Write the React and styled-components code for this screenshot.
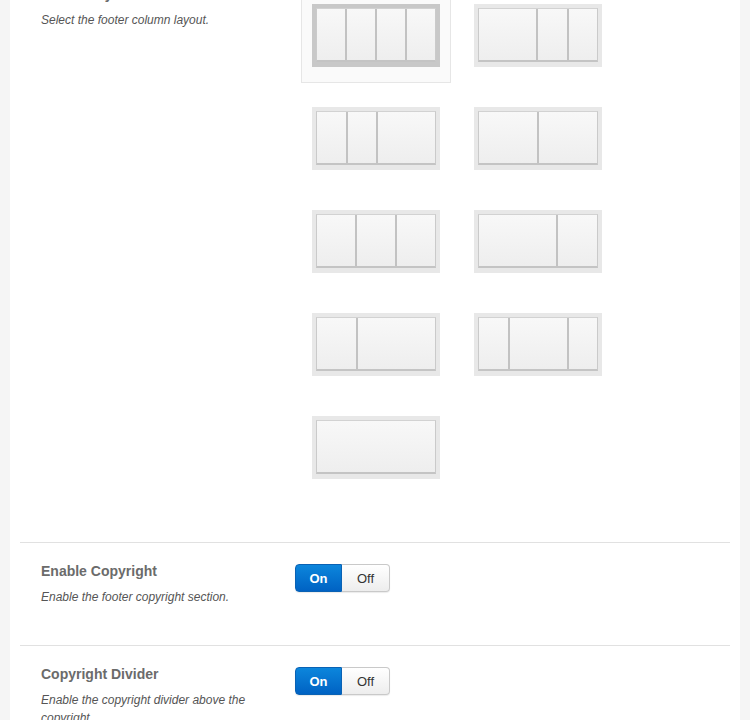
import React from "react";
import styled, { createGlobalStyle } from "styled-components";

const Global = createGlobalStyle`
  html, body { margin: 0; padding: 0; background: #f5f5f5; }
  body { overflow: hidden; font-family: "Liberation Sans", Arial, sans-serif; }
`;

const Shell = styled.div`
  padding: 0 10px;
  background: #f5f5f5;
  height: 720px;
  overflow: hidden;
`;

const Panel = styled.div`
  background: #fff;
  padding: 0 10px;
  min-height: 800px;
  margin-top: -34px;
`;

const Section = styled.div`
  display: flex;
  padding: 18px 0 39px;
  border-top: ${(p) => (p.$first ? "none" : "1px solid #e1e1e1")};
`;

const Info = styled.div`
  width: 275px;
  flex: none;
  padding-left: 21px;
  box-sizing: border-box;
  padding-right: 40px;
`;

const Title = styled.div`
  font-size: 14px;
  line-height: 20px;
  font-weight: bold;
  color: #6b6b6b;
`;

const Desc = styled.div`
  margin-top: 7px;
  font-size: 12px;
  line-height: 18px;
  font-style: italic;
  color: #555;
`;

const Control = styled.div`
  flex: 1;
`;

const Grid = styled.div`
  display: grid;
  grid-template-columns: 150px 150px;
  column-gap: 12px;
  row-gap: 13px;
  margin: 9px 0 8px 6px;
`;

const Cell = styled.div`
  box-sizing: border-box;
  width: 150px;
  height: 90px;
  padding: 10px 10px 15px;
  border: 1px solid ${(p) => (p.$selected ? "#e6e6e6" : "transparent")};
  background: ${(p) => (p.$selected ? "#fafafa" : "transparent")};
`;

const Frame = styled.div`
  width: 128px;
  height: 63px;
  box-sizing: border-box;
  padding: 4px 4px 5px;
  background: ${(p) => (p.$selected ? "#c8c8c8" : "#e8e8e8")};
`;

const Cols = styled.div`
  display: flex;
  height: 54px;
  box-sizing: border-box;
  border: 1px solid #d2d2d2;
  border-bottom: 2px solid #c4c4c4;
  border-left-color: #cacaca;
  border-right-color: #cacaca;
  background: linear-gradient(#f8f8f8, #eeeeee);
`;

const Col = styled.div`
  flex: ${(p) => p.$f};
  border-right: 2px solid #c2c2c2;
  &:last-child { border-right: none; }
`;

const Toggle = styled.div`
  display: inline-flex;
  margin-top: 3px;
  height: 28px;
  border-radius: 4px;
  box-shadow: 0 1px 1px rgba(0, 0, 0, 0.08);
`;

const Seg = styled.div`
  box-sizing: border-box;
  width: ${(p) => (p.$on ? "47px" : "48px")};
  display: flex;
  align-items: center;
  justify-content: center;
  font-size: 13px;
  font-weight: ${(p) => (p.$on ? "bold" : "normal")};
  color: ${(p) => (p.$on ? "#fff" : "#333")};
  background: ${(p) =>
    p.$on ? "linear-gradient(#0c86dc, #0062c3)" : "linear-gradient(#ffffff, #ededed)"};
  border: 1px solid ${(p) => (p.$on ? "#0a62b4" : "#c9c9c9")};
  border-left-width: ${(p) => (p.$on ? "1px" : "0")};
  border-radius: ${(p) => (p.$on ? "4px 0 0 4px" : "0 4px 4px 0")};
`;

const layouts = [
  [1, 1, 1, 1],
  [2, 1, 1],
  [1, 1, 2],
  [1, 1],
  [1, 1, 1],
  [2, 1],
  [1, 2],
  [1, 2, 1],
  [1],
];

function Switch() {
  return (
    <Toggle>
      <Seg $on>On</Seg>
      <Seg>Off</Seg>
    </Toggle>
  );
}

export default function App() {
  return (
    <>
      <Global />
      <Shell>
        <Panel>
          <Section $first>
            <Info>
              <Title>Footer Layout</Title>
              <Desc>Select the footer column layout.</Desc>
            </Info>
            <Control>
              <Grid>
                {layouts.map((l, i) => (
                  <Cell key={i} $selected={i === 0}>
                    <Frame $selected={i === 0}>
                      <Cols>
                        {l.map((f, j) => (
                          <Col key={j} $f={f} />
                        ))}
                      </Cols>
                    </Frame>
                  </Cell>
                ))}
              </Grid>
            </Control>
          </Section>
          <Section>
            <Info>
              <Title>Enable Copyright</Title>
              <Desc>Enable the footer copyright section.</Desc>
            </Info>
            <Control>
              <Switch />
            </Control>
          </Section>
          <Section>
            <Info>
              <Title>Copyright Divider</Title>
              <Desc>Enable the copyright divider above the copyright.</Desc>
            </Info>
            <Control>
              <Switch />
            </Control>
          </Section>
        </Panel>
      </Shell>
    </>
  );
}
